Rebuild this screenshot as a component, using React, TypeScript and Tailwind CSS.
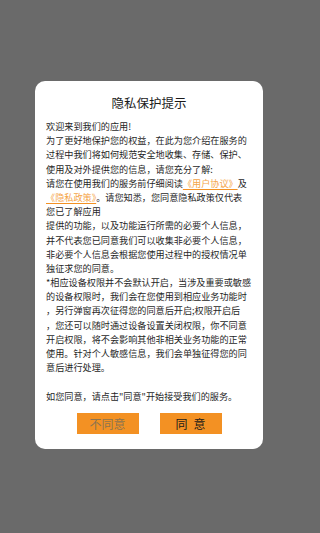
import React from 'react';

type Seg = string | { link: string };

// 每一行按原图换行
const lines: Seg[][] = [
    ['欢迎来到我们的应用!'],
    ['为了更好地保护您的权益，在此为您介绍在服务的'],
    ['过程中我们将如何规范安全地收集、存储、保护、'],
    ['使用及对外提供您的信息，请您充分了解:'],
    ['请您在使用我们的服务前仔细阅读', { link: '《用户协议》' }, '及'],
    [{ link: '《隐私政策》' }, '。请您知悉，您同意隐私政策仅代表'],
    ['您已了解应用'],
    ['提供的功能，以及功能运行所需的必要个人信息，'],
    ['并不代表您已同意我们可以收集非必要个人信息，'],
    ['非必要个人信息会根据您使用过程中的授权情况单'],
    ['独征求您的同意。'],
    ['*相应设备权限并不会默认开启，当涉及重要或敏感'],
    ['的设备权限时，我们会在您使用到相应业务功能时'],
    ['，另行弹窗再次征得您的同意后开启;权限开启后'],
    ['，您还可以随时通过设备设置关闭权限，你不同意'],
    ['开启权限，将不会影响其他非相关业务功能的正常'],
    ['使用。针对个人敏感信息，我们会单独征得您的同'],
    ['意后进行处理。'],
    [''],
    ['如您同意，请点击"同意"开始接受我们的服务。'],
];

const Line: React.FC<{ segs: Seg[] }> = ({ segs }) => (
    <div className="h-[14.2px] leading-[14.2px] whitespace-nowrap">
        {segs.map((s, i) =>
            typeof s === 'string' ? (
                <span key={i}>{s || '\u00a0'}</span>
            ) : (
                <span
                    key={i}
                    className="text-[#f5a54a] underline decoration-[#f39123] underline-offset-2"
                >
                    {s.link}
                </span>
            )
        )}
    </div>
);

export default function App() {
    return (
        <div
            className="w-full min-h-screen h-[533px] bg-[#6a6a6a] pt-[81px] overflow-hidden"
            style={{ fontFamily: '"Noto Sans CJK SC", "Noto Sans", sans-serif' }}
        >
            <div className="ml-[35px] w-[228px] h-[368px] bg-white rounded-[10px] pt-[14px]">
                <h1 className="text-center text-[12.5px] leading-[16px] text-[#1a1a1a]">
                    隐私保护提示
                </h1>

                <div className="mt-[8px] pl-[11px] text-[9.14px] text-[#1f1f1f]">
                    {lines.map((segs, i) => (
                        <Line key={i} segs={segs} />
                    ))}
                </div>

                <div className="mt-[10px] flex justify-center gap-[21px]">
                    <button className="w-[62px] h-[21px] bg-[#f39123] text-[12px] leading-[21px] text-[#8c7450]">
                        不同意
                    </button>
                    <button className="w-[62px] h-[21px] bg-[#f39123] text-[12px] leading-[21px] text-[#1a1a1a] flex items-center justify-center gap-[6px]">
                        <span>同</span>
                        <span>意</span>
                    </button>
                </div>
            </div>
        </div>
    );
}
